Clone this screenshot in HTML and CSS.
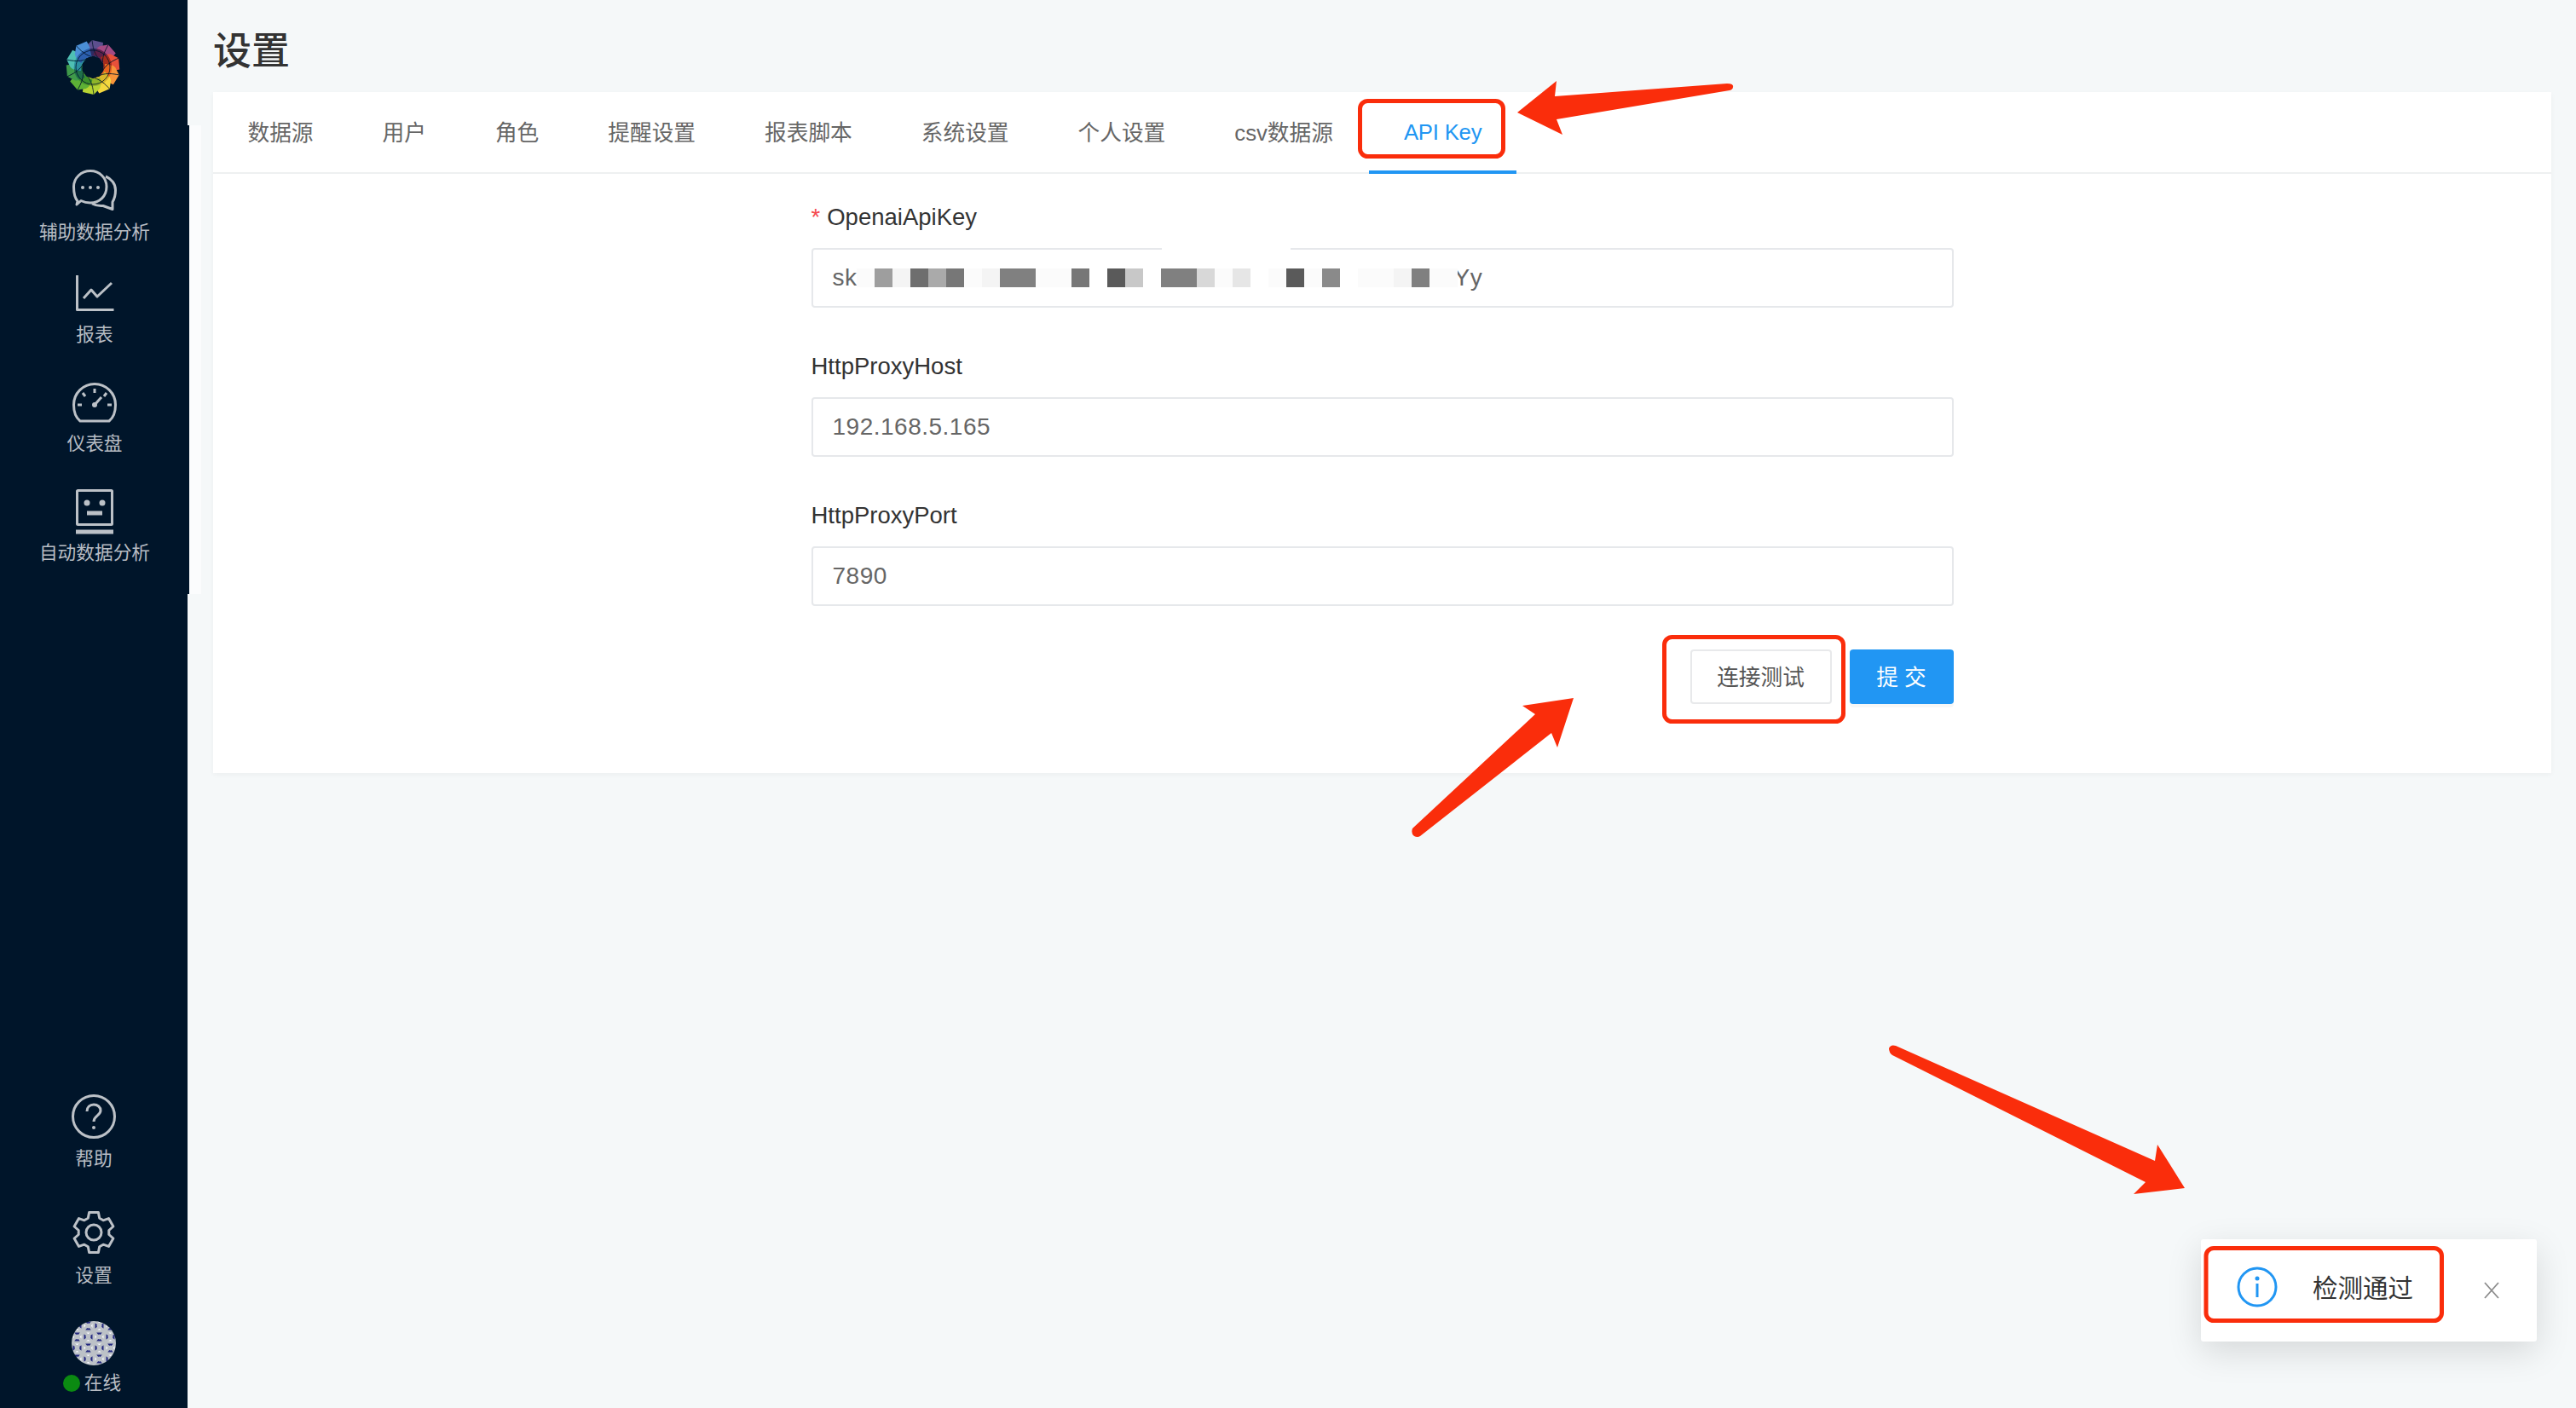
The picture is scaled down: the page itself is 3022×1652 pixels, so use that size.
FILE: index.html
```html
<!DOCTYPE html>
<html lang="zh-CN">
<head>
    <meta charset="UTF-8">
    <title>设置</title>
    <link rel="stylesheet" href="styles.css">
</head>
<body>
    <div class="app">
        <!-- Sidebar -->
        <aside class="sidebar">
            <div class="logo">
                <svg width="66" height="66" viewBox="-33 -33 66 66">
                    <defs>
                        <path id="petal" d="M-8 -25 L-1 -32 L12 -29 C11.500 -21 9 -15 6 -11 C1 -14 -4 -14 -8 -12 C-10 -17 -10 -21 -8 -25Z"/>
                        <path id="petal-in" d="M-8.500 -20 C-3 -23 3 -23 9.500 -20 C9 -17 7.500 -14 6 -11 C1 -14 -4 -14 -8 -12 C-9.500 -15 -9.500 -17 -8.500 -20Z"/>
                        <path id="petal-line" d="M-1 -32 C0 -24 1 -18 6 -11"/>
                    </defs>
                    <use href="#petal" fill="#5d4f8e"/>
                    <use href="#petal" fill="#a34a83" transform="rotate(36)"/>
                    <use href="#petal" fill="#e8503a" transform="rotate(72)"/>
                    <use href="#petal" fill="#f7953a" transform="rotate(108)"/>
                    <use href="#petal" fill="#f4d83e" transform="rotate(144)"/>
                    <use href="#petal" fill="#b6d433" transform="rotate(180)"/>
                    <use href="#petal" fill="#5db136" transform="rotate(216)"/>
                    <use href="#petal" fill="#3f9a4a" transform="rotate(252)"/>
                    <use href="#petal" fill="#4fc0b4" transform="rotate(288)"/>
                    <use href="#petal" fill="#4b8fd6" transform="rotate(324)"/>
                    <use href="#petal-in" fill="#2e2a60"/>
                    <use href="#petal-in" fill="#5c1f48" transform="rotate(36)"/>
                    <use href="#petal-in" fill="#a52c1c" transform="rotate(72)"/>
                    <use href="#petal-in" fill="#e8651f" transform="rotate(108)"/>
                    <use href="#petal-in" fill="#d9b82a" transform="rotate(144)"/>
                    <use href="#petal-in" fill="#8fb52a" transform="rotate(180)"/>
                    <use href="#petal-in" fill="#3c8f2c" transform="rotate(216)"/>
                    <use href="#petal-in" fill="#1f6f4a" transform="rotate(252)"/>
                    <use href="#petal-in" fill="#2b8fa0" transform="rotate(288)"/>
                    <use href="#petal-in" fill="#2c5fae" transform="rotate(324)"/>
                    <g class="logo-lines">
                        <use href="#petal-line"/>
                        <use href="#petal-line" transform="rotate(36)"/>
                        <use href="#petal-line" transform="rotate(72)"/>
                        <use href="#petal-line" transform="rotate(108)"/>
                        <use href="#petal-line" transform="rotate(144)"/>
                        <use href="#petal-line" transform="rotate(180)"/>
                        <use href="#petal-line" transform="rotate(216)"/>
                        <use href="#petal-line" transform="rotate(252)"/>
                        <use href="#petal-line" transform="rotate(288)"/>
                        <use href="#petal-line" transform="rotate(324)"/>
                        <circle r="20"/>
                    </g>
                </svg>
            </div>
            <nav class="nav">
                <a class="nav-item">
                    <svg class="nav-icon" viewBox="0 0 64 64"><g transform="translate(6 3)">
                        <path d="M6 37 C2.500 33 1.500 27 1.500 20 C1.500 10 10 1.500 21 1.500 C32 1.500 40 10 40 20 C40 31 32 39 21 39 C16 39 13 38 10 36.500 L5 41Z"/>
                        <path d="M39 8 C46 11 50.500 17 50.500 24 C50.500 30 49.500 34 47 38 L47 46.500 L36 42.500 C31 43 27 42 23 40"/>
                        <circle class="dot" cx="12" cy="21" r="2"/><circle class="dot" cx="21" cy="21" r="2"/><circle class="dot" cx="30" cy="21" r="2"/>
                    </g></svg>
                    <span class="nav-label">辅助数据分析</span>
                </a>
                <a class="nav-item">
                    <svg class="nav-icon" viewBox="0 0 64 64"><g transform="translate(10 7)">
                        <path d="M1.500 0 V40.500 H44.500"/>
                        <path d="M9 27 L18 17 L25 25 L42 9"/>
                    </g></svg>
                    <span class="nav-label">报表</span>
                </a>
                <a class="nav-item">
                    <svg class="nav-icon" viewBox="0 0 64 64"><g transform="translate(6 5)">
                        <path d="M9 45 C4 41 1.500 33 1.500 26 A24.500 24.500 0 0 1 50.500 26 C50.500 33 48 41 43 45Z"/>
                        <path d="M26 7 V12 M12 12 L15 16 M40 12 L37 16 M6 26 H11 M41 26 H46"/>
                        <path d="M26 26 L34 17"/><circle class="dot" cx="26" cy="26" r="3"/>
                    </g></svg>
                    <span class="nav-label">仪表盘</span>
                </a>
                <a class="nav-item">
                    <svg class="nav-icon" viewBox="0 0 64 64"><g transform="translate(10 2)">
                        <rect x="1.500" y="1.500" width="41" height="40" rx="1"/>
                        <circle class="dot" cx="13" cy="16" r="3.500"/><circle class="dot" cx="31" cy="16" r="3.500"/>
                        <path class="thick" d="M13 28 H31"/><path class="thick" d="M0 50 H44"/>
                    </g></svg>
                    <span class="nav-label">自动数据分析</span>
                </a>
            </nav>
            <div class="foot">
                <a class="nav-item foot-help">
                    <svg class="nav-icon" viewBox="0 0 64 64"><g transform="translate(6 1)">
                        <circle cx="26" cy="26" r="24.500"/>
                        <path d="M18 20 C18 15 21.500 12 26 12 C30.500 12 34 15 34 19 C34 25 26 25 26 32"/>
                        <circle class="dot" cx="26" cy="39" r="2"/>
                    </g></svg>
                    <span class="nav-label">帮助</span>
                </a>
                <a class="nav-item foot-set">
                    <svg class="nav-icon" viewBox="0 0 64 64"><g transform="translate(7 0)">
                        <path d="M19.600 2.600 L30.400 2.600 L31.700 9.300 L36.100 11.800 L42.500 9.600 L47.900 19 L42.800 23.500 L42.800 28.500 L47.900 33 L42.500 42.400 L36.100 40.200 L31.700 42.700 L30.400 49.400 L19.600 49.400 L18.300 42.700 L13.900 40.200 L7.500 42.400 L2.100 33 L7.200 28.500 L7.200 23.500 L2.100 19 L7.500 9.600 L13.900 11.800 L18.300 9.300Z"/>
                        <circle cx="25" cy="26" r="9"/>
                    </g></svg>
                    <span class="nav-label">设置</span>
                </a>
                <a class="nav-item">
                    <svg class="nav-icon" viewBox="0 0 64 64">
                        <defs>
                            <pattern id="quilt" width="26" height="26" patternUnits="userSpaceOnUse" x="6" y="3">
                                <rect width="26" height="26" fill="#fbfbff"/>
                                <path fill="#232880" d="M0 0 L8 6.500 L0 13Z M13 0 L5 6.500 L13 13Z M13 0 L26 0 L19.500 8Z M13 13 L26 13 L19.500 5Z M0 13 L13 13 L6.500 21Z M0 26 L13 26 L6.500 18Z M13 13 L21 19.500 L13 26Z M26 13 L18 19.500 L26 26Z"/>
                            </pattern>
                        </defs>
                        <circle class="avatar" cx="32" cy="30" r="26" fill="url(#quilt)"/>
                    </svg>
                    <span class="nav-label status"><i class="status-dot"></i>在线</span>
                </a>
            </div>
        </aside>

        <main class="main">
            <h1 class="page-title">设置</h1>
            <section class="card">
                <div class="tabs">
                    <a class="tab">数据源</a>
                    <a class="tab">用户</a>
                    <a class="tab">角色</a>
                    <a class="tab">提醒设置</a>
                    <a class="tab">报表脚本</a>
                    <a class="tab">系统设置</a>
                    <a class="tab">个人设置</a>
                    <a class="tab">csv数据源</a>
                    <a class="tab active">API Key</a>
                </div>
                <form class="form">
                    <label class="field-label"><span class="required">*</span>OpenaiApiKey</label>
                    <div class="field-input key-input">
                        <span class="field-gap"></span>
                        <span class="key-start">sk</span>
                        <span class="mosaic">
                            <i class="a"></i><i class="g"></i><i class="b"></i><i class="k"></i><i class="f"></i><i class="j"></i><i class="a"></i><i class="b"></i><i class="i"></i><i class="i"></i><i class="a"></i><i class="a"></i><i class="j"></i><i class="w"></i><i class="l"></i><i class="e"></i><i class="w"></i><i class="i"></i><i class="i"></i><i class="d"></i><i class="a"></i><i class="c"></i><i class="w"></i><i class="a"></i><i class="l"></i><i class="a"></i><i class="h"></i><i class="w"></i><i class="a"></i><i class="a"></i><i class="b"></i><i class="i"></i><i class="a"></i><i class="a"></i>
                        </span>
                        <span class="key-end">Yy</span>
                    </div>
                    <label class="field-label">HttpProxyHost</label>
                    <input class="field-input" value="192.168.5.165">
                    <label class="field-label">HttpProxyPort</label>
                    <input class="field-input" value="7890">
                    <div class="actions">
                        <button type="button" class="btn">连接测试</button>
                        <button type="button" class="btn btn-primary">提 交</button>
                    </div>
                </form>
            </section>
        </main>
    </div>

    <!-- Notification -->
    <div class="toast">
        <svg class="toast-icon" width="48" height="48" viewBox="0 0 48 48">
            <circle cx="24" cy="24" r="22" fill="none" stroke="#2196f3" stroke-width="3"/>
            <circle cx="24" cy="14" r="2.500" fill="#2196f3"/>
            <path d="M24 20 V36" stroke="#2196f3" stroke-width="3" fill="none"/>
        </svg>
        <span class="toast-text">检测通过</span>
        <svg class="toast-close" width="20" height="22" viewBox="0 0 20 22">
            <path d="M2 2 L18 20 M18 2 L2 20" stroke="#8c8c8c" stroke-width="1.800" fill="none"/>
        </svg>
    </div>

    <!-- Red annotations drawn over the screenshot -->
    <svg class="marks" width="3022" height="1652" viewBox="0 0 3022 1652">
        <rect class="mark-box" x="1595.500" y="118.500" width="168" height="65" rx="9"/>
        <rect class="mark-box" x="1952.500" y="747.500" width="210" height="99" rx="9"/>
        <rect class="mark-box" x="2588" y="1464.500" width="276.500" height="85" rx="9"/>
        <path class="mark-arrow" d="M1780 132 L1826 95 L1824 113 L2026 98 Q2034 98 2033 102 Q2033 105 2029 106 L1826 140 L1833 158Z"/>
        <path class="mark-arrow" d="M1846 819 L1786 828 L1801 838 L1657 972 Q1655 978 1659 981 Q1663 983 1666 981 L1820 860 L1827 877Z"/>
        <path class="mark-arrow" d="M2563 1394 L2531 1343 L2528 1362 L2224 1227 Q2218 1225 2216 1230 Q2216 1235 2220 1238 L2517 1387 L2503 1401Z"/>
    </svg>
</body>
</html>
```

FILE: styles.css
```css
* {
    box-sizing: border-box;
}

html, body {
    margin: 0;
    height: 100%;
}

body {
    position: relative;
    width: 3022px;
    height: 1652px;
    overflow: hidden;
    font-family: "Liberation Sans", "Noto Sans CJK SC", sans-serif;
    background-color: #f5f8f9;
    color: #333;
}

.app {
    display: flex;
    height: 1652px;
}

/* Sidebar */
.sidebar {
    width: 220px;
    flex: none;
    display: flex;
    flex-direction: column;
    background-color: #00152a;
}

.logo {
    height: 147px;
    display: flex;
    align-items: center;
    justify-content: center;
    padding-top: 11px;
    padding-right: 2px;
}

.logo-lines {
    fill: none;
    stroke: #00152a;
    stroke-width: 0.800;
}

.nav {
    width: 222px;
    height: 550px;
    padding-top: 49px;
    background-color: #00152a;
    box-shadow: 14px 0 0 #fbfcfd;
}

.nav-item {
    display: flex;
    flex-direction: column;
    align-items: center;
    margin-bottom: 38px;
}

.nav-item:first-child {
    margin-bottom: 30px;
}

.nav-icon {
    display: block;
    width: 64px;
    height: 64px;
    fill: none;
    stroke: #bcc1c7;
    stroke-width: 3;
    stroke-linejoin: round;
}

.nav-icon .dot {
    fill: #bcc1c7;
    stroke: none;
}

.nav-icon .thick {
    stroke-width: 5;
}

.nav-icon .avatar {
    stroke: none;
}

.nav-label {
    font-size: 21.700px;
    line-height: 26px;
    color: #b7bcc3;
    white-space: nowrap;
}

.foot {
    margin-top: auto;
    padding-bottom: 16px;
}

.foot .nav-item {
    margin-bottom: 0;
}

.foot .foot-help {
    margin-bottom: 47px;
}

.foot .foot-set {
    margin-bottom: 36px;
}

.status {
    display: flex;
    align-items: center;
    gap: 5px;
    margin-left: -4px;
}

.status-dot {
    width: 20px;
    height: 20px;
    border-radius: 50%;
    background-color: #0b8a12;
}

/* Main */
.main {
    flex: 1;
    min-width: 0;
    padding: 0 29px 0 30px;
}

.page-title {
    height: 108px;
    margin: 0;
    padding-top: 4px;
    display: flex;
    align-items: center;
    font-size: 45px;
    font-weight: 500;
    color: #333;
}

.card {
    background-color: #fff;
    box-shadow: 0 2px 6px rgba(0,0,0,0.04);
}

.tabs {
    display: flex;
    height: 96px;
    border-bottom: 2px solid #eef0f1;
}

.tab {
    height: 96px;
    padding: 0 40.500px 5px;
    display: flex;
    align-items: center;
    font-size: 25.700px;
    color: #666;
    white-space: nowrap;
}

.tab.active {
    margin-left: 2px;
    padding-top: 2px;
    padding-bottom: 0;
    letter-spacing: -0.200px;
    color: #2196f3;
    border-bottom: 4px solid #2196f3;
}

.form {
    width: 1340px;
    margin: 0 auto;
    padding: 36px 0 81px;
}

.field-label {
    display: block;
    height: 30px;
    margin-bottom: 21px;
    font-size: 27.500px;
    line-height: 30px;
    color: #333;
}

.required {
    margin-right: 8px;
    color: #f5484d;
}

.field-input {
    display: flex;
    align-items: center;
    position: relative;
    width: 100%;
    height: 70px;
    margin-bottom: 54px;
    padding: 0 23px;
    border: 2px solid #e6e8eb;
    border-radius: 4px;
    background: #fff;
    font-family: inherit;
    font-size: 28px;
    letter-spacing: 0.500px;
    color: #666;
    outline: none;
}

.field-gap {
    position: absolute;
    top: -2px;
    left: 409px;
    width: 151px;
    height: 3px;
    background-color: #fff;
}

.key-start {
    flex: none;
    width: 28px;
    white-space: nowrap;
}

.key-end {
    margin-left: -4px;
}

.mosaic {
    flex: none;
    position: relative;
    display: flex;
    width: 705px;
    height: 22px;
    overflow: hidden;
}

.mosaic i {
    flex: 0 0 21px;
}

.mosaic .w { background-color: #fff; }
.mosaic .a { background-color: #fbfbfb; }
.mosaic .b { background-color: #f4f4f4; }
.mosaic .c { background-color: #e6e6e6; }
.mosaic .d { background-color: #d8d8d8; }
.mosaic .e { background-color: #c8c8c8; }
.mosaic .f { background-color: #aaa; }
.mosaic .g { background-color: #9e9e9e; }
.mosaic .h { background-color: #8a8a8a; }
.mosaic .i { background-color: #808080; }
.mosaic .j { background-color: #777; }
.mosaic .k { background-color: #6e6e6e; }
.mosaic .l { background-color: #5a5a5a; }

.actions {
    display: flex;
    justify-content: flex-end;
    gap: 21px;
    margin-top: -3px;
}

.btn {
    width: 166px;
    height: 64px;
    padding: 0 0 3px;
    border: 2px solid #e8e9eb;
    border-radius: 4px;
    background: #fff;
    font-family: inherit;
    font-size: 25.700px;
    color: #555;
}

.btn-primary {
    width: 122px;
    border: none;
    background: #2196f3;
    color: #fff;
    box-shadow: 0 4px 0 rgba(0,0,0,0.03);
}

/* Notification */
.toast {
    position: absolute;
    left: 2582px;
    top: 1454px;
    width: 394px;
    height: 120px;
    display: flex;
    align-items: center;
    border-radius: 3px;
    background-color: #fff;
    box-shadow: 0 12px 40px rgba(0,0,0,0.13);
}

.toast-icon {
    flex: none;
    margin: -9px 0 0 42px;
}

.toast-text {
    margin: -11px 0 0 41px;
    font-size: 29.500px;
    color: #333;
    white-space: nowrap;
}

.toast-close {
    flex: none;
    margin: -1px 0 0 82px;
}

/* Annotations */
.marks {
    position: absolute;
    left: 0;
    top: 0;
    pointer-events: none;
}

.mark-box {
    fill: none;
    stroke: #fa2d0b;
    stroke-width: 5;
}

.mark-arrow {
    fill: #fa2d0b;
}
```
